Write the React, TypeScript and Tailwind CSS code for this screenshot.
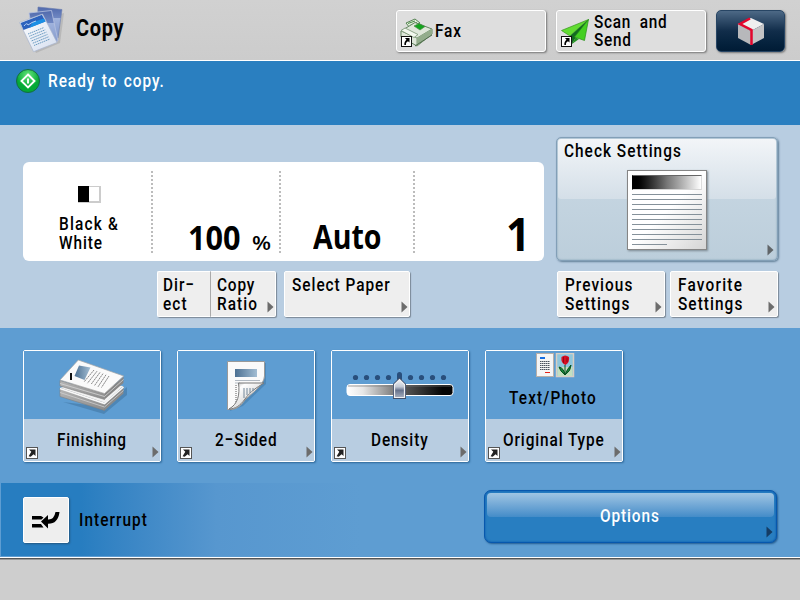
import type { ReactNode } from "react";

type TextProps = { children: ReactNode; className?: string };

/* One line of the panel's narrow gothic lettering. */
function Line({ children, className = "tracking-[1.3px]" }: TextProps) {
  return (
    <span className={`block h-[19px] w-0 origin-left scale-x-[0.81] whitespace-nowrap text-[19px] leading-[19px] font-medium ${className}`}>
      {children}
    </span>
  );
}

function Arrow({ className = "text-[#6c6c6c]" }: { className?: string }) {
  return (
    <svg className={`absolute h-[12px] w-[7px] ${className}`} viewBox="0 0 7 12">
      <path d="M0.5 0.5 L6.5 6 L0.5 11.5 Z" fill="currentColor" />
    </svg>
  );
}

function Shortcut({ className }: { className: string }) {
  return (
    <svg className={`absolute size-[12px] ${className}`} viewBox="0 0 12 12">
      <rect x="0.5" y="0.5" width="11" height="11" fill="#fff" stroke="#555" />
      <path d="M3 2.500 H9.500 V9 L7.600 7.200 L4.700 9.700 L2.600 9.200 L5.300 4.800 Z" fill="#222" />
    </svg>
  );
}

function HeaderShortcut({ className }: { className: string }) {
  return (
    <svg className={`absolute size-[11px] ${className}`} viewBox="0 0 11 11">
      <rect x="0.5" y="0.5" width="10" height="10" fill="#fff" stroke="#111" />
      <path d="M4 2 H8.5 V6.5 L7 5.2 C5 6.2 4.8 7.5 5 9 H3.4 C3 6.8 4 5 5.5 3.8 Z" fill="#000" />
    </svg>
  );
}

function CopyIcon() {
  return (
    <svg className="h-[48px] w-[46px]" viewBox="0 0 46 48">
      <defs>
        <linearGradient id="pg" x1="0" y1="0" x2="1" y2="1">
          <stop offset="0" stopColor="#fff" />
          <stop offset="1" stopColor="#d5deef" />
        </linearGradient>
        <linearGradient id="pg2" x1="0" y1="0" x2="0" y2="1">
          <stop offset="0" stopColor="#5069ac" />
          <stop offset="0.35" stopColor="#6f87c2" />
          <stop offset="0.37" stopColor="#9fb2dc" />
          <stop offset="1" stopColor="#8298cb" />
        </linearGradient>
      </defs>
      <path d="M5 20 L17 48 L41 38 L45 8Z" fill="#777" opacity="0.25" />
      <path d="M19 2 L43 4.500 L39 33 L18 32Z" fill="url(#pg2)" stroke="#6c7dae" strokeWidth="0.6" />
      <path d="M10 8 L32.500 5.500 L39 36 L16 40Z" fill="url(#pg2)" stroke="#b6c2e0" strokeWidth="0.8" />
      <path d="M0.500 17.500 L23.500 9 L38 37.500 L14.500 46.700Z" fill="url(#pg)" stroke="#a7b3cc" strokeWidth="0.7" />
      <path d="M1.500 18 L23 9.700 L26.500 16.500 L4.500 25Z" fill="#2d62bd" />
      <path d="M14 17 L25 13.500 L26.500 16.500 L10 23Z" fill="#1b8fe4" />
      <path d="M5 21 q3 -4 4 -1 q4 -3 8 -4" fill="none" stroke="#b6d2f4" />
      <g stroke="#6b9cc2" strokeWidth="1" strokeDasharray="1.5 0.6">
        <path d="M9 29 L25 22.500M10.200 31.300L26.200 24.800M11.400 33.600L27.400 27.100M12.600 35.900L28.600 29.400M13.800 38.200L29.800 31.700M15 40.500L31 34" />
      </g>
    </svg>
  );
}

function FaxIcon() {
  return (
    <svg className="h-[30px] w-[34px]" viewBox="0 0 34 30">
      <path d="M6 5 L15 1 L20 5 L10 10Z" fill="#e3f0dc" stroke="#568253" />
      <path d="M8 5.500 L15 3 M10 7.500 L17 4.500" stroke="#488a45" />
      <path d="M1 13 L15 4.500 L32 11 L32 16 L17 28 L1 19Z" fill="#dfe7da" stroke="#62845f" />
      <path d="M1 13 L17 20 L32 11 M17 20 V27" fill="none" stroke="#809b79" />
      <path d="M17 20 L32 11 V16 L17 28Z" fill="#93ad8c" />
      <path d="M14 8 L19 5.500 L25 8.500 L20 12Z" fill="#12a51d" stroke="#508b4a" strokeWidth="0.7" />
      <path d="M1 12.500 L5 10 L18 16.500 L14 19.500Z" fill="#f2f7ee" stroke="#789473" strokeWidth="0.8" />
      <path d="M15 28 L32 17" stroke="#4f6c4c" />
    </svg>
  );
}

function PlaneIcon() {
  return (
    <svg className="h-[30px] w-[30px]" viewBox="0 0 30 30">
      <path d="M27.500 0.500 L0.500 11.500 L9 17Z" fill="#62dc32" stroke="#35951e" strokeWidth="0.7" />
      <path d="M27.500 0.500 L9 17 L11 25 L15 18Z" fill="#126b20" />
      <path d="M27.500 0.500 L13.500 18 L23.500 21.500Z" fill="#43cf21" stroke="#278e19" strokeWidth="0.7" />
      <path d="M11 25 L14.500 18.500 L18 20Z" fill="#239421" />
    </svg>
  );
}

function CubeIcon() {
  return (
    <svg className="h-[29px] w-[28px]" viewBox="0 0 28 29">
      <path d="M14 1 L27 7 L14 14 L1 7Z" fill="#efefef" />
      <path d="M1 7 L14 14 V28 L1 21Z" fill="#b7b8bb" />
      <path d="M27 7 L14 14 V28 L27 21Z" fill="#c3c3c5" />
      <path d="M13 1.500 L3 7 L14.500 13 V28" fill="none" stroke="#e3052c" strokeWidth="2.500" />
    </svg>
  );
}

function DocumentIcon() {
  return (
    <div className="h-[80px] w-[80px] border border-[#858585] bg-linear-to-br from-white from-50% to-[#d5d5d5] p-1 shadow-[1px_1px_2px_#7c8992]">
      <div className="h-[15px] border border-t-[#666] border-r-[#ddd] border-b-[#d5d5d5] border-l-black bg-linear-to-r from-black via-[#777] to-white" />
      <div className="mt-1 flex flex-col gap-1">
        <i className="h-px bg-[#85919a]" />
        <i className="h-px bg-[#85919a]" />
        <i className="h-px bg-[#85919a]" />
        <i className="h-px bg-[#85919a]" />
        <i className="h-px bg-[#85919a]" />
        <i className="h-px bg-[#85919a]" />
        <i className="h-px bg-[#85919a]" />
        <i className="h-px bg-[#85919a]" />
        <i className="h-px bg-[#85919a]" />
        <i className="h-px bg-[#85919a]" />
        <i className="h-px w-1/2 bg-[#85919a]" />
      </div>
    </div>
  );
}

function FinishingIcon() {
  return (
    <svg className="ml-[33px] mt-[6px] h-[58px] w-[72px]" viewBox="0 0 72 58">
      <defs>
        <linearGradient id="stackSide" x1="0" y1="0" x2="1" y2="1">
          <stop offset="0" stopColor="#b5b5b5" />
          <stop offset="1" stopColor="#8c8c8c" />
        </linearGradient>
        <linearGradient id="photo" x1="0" y1="0" x2="1" y2="0">
          <stop offset="0" stopColor="#4c7092" />
          <stop offset="1" stopColor="#a2bdd3" />
        </linearGradient>
      </defs>
      <path d="M6 45 L47 57 L70 38 V30 L48 50Z" fill="#34658d" opacity="0.4" />
      <path d="M3 31 L20 25 L66.500 29 L47.500 46Z" fill="#f2f2f2" />
      <path d="M3 31 L47.500 46 V53.500 L3 39.500Z" fill="url(#stackSide)" stroke="#808080" strokeWidth="0.6" />
      <path d="M47.500 46 L66.500 29 V36.500 L47.500 53.500Z" fill="#8a8a8a" />
      <path d="M3 31.500 L47.500 46.500 L66.500 30" fill="none" stroke="#f8f8f8" strokeWidth="1.600" />
      <path d="M3 35.500 L47.500 50 L66.500 33.500" fill="none" stroke="#cfcfcf" strokeWidth="0.8" />
      <path d="M3 23.500 L47.500 36.500 V42.500 L3 29Z" fill="url(#stackSide)" stroke="#808080" strokeWidth="0.6" />
      <path d="M47.500 36.500 L66.500 19.500 V26 L47.500 42.500Z" fill="#868686" />
      <path d="M3 23 L21.300 3 L66.700 19 L47.500 36.500Z" fill="#fafafa" stroke="#a5a5a5" strokeWidth="0.7" />
      <path d="M3 26.500 L47.500 39.500 L66.500 22.500" fill="none" stroke="#d5d5d5" strokeWidth="0.8" />
      <path d="M22 8.500 L33.500 10.500 L27.500 23 L17.500 19Z" fill="url(#photo)" />
      <path d="M14 16 V23" stroke="#111" strokeWidth="2" />
      <path d="M37 13 L27 25M40 14.200L30.500 26.200M43 15.400L34 27.400M46 16.600L37.500 28.600M49 17.800L41 29.800M52 19L44.500 30.500" stroke="#888" strokeWidth="1" strokeDasharray="2 0.5" />
    </svg>
  );
}

function TwoSidedIcon() {
  return (
    <svg className="ml-[48px] mt-[9px] h-[52px] w-[42px]" viewBox="0 0 42 52">
      <defs>
        <linearGradient id="curl" x1="0" y1="0" x2="1" y2="1">
          <stop offset="0" stopColor="#888" />
          <stop offset="0.25" stopColor="#fff" />
          <stop offset="0.6" stopColor="#ddd" />
          <stop offset="1" stopColor="#777" />
        </linearGradient>
      </defs>
      <path d="M3 3 H40 V24 L17 46 L4 51Z" fill="#31658e" opacity="0.35" />
      <path d="M1.500 1.500 H38.500 V16 C38 25 28 31 19 40 C13 48 9 50 1.500 49.500Z" fill="#fafafa" stroke="#999" />
      <rect x="9" y="9" width="22" height="8" fill="url(#photo)" />
      <path d="M9 20.500 H34 M9 23 H14" stroke="#b1b9c2" />
      <path d="M10 25 V45" stroke="#aaa" strokeWidth="2" strokeDasharray="1 1" />
      <path d="M12.500 23 H38 C30 28 25 31 19 39 C14 46 9 49 3 49 C12 44 14 35 12.500 23Z" fill="url(#curl)" stroke="#777" />
      <path d="M18 28 V38M21 28V35M24 28V33M27 28V31" stroke="#728799" />
    </svg>
  );
}

function DensityIcon() {
  const dots = [8, 19, 30, 41, 63, 74, 85, 96];
  return (
    <svg className="ml-[14px] mt-[20px] h-[32px] w-[110px]" viewBox="0 0 110 32">
      <defs>
        <linearGradient id="density">
          <stop offset="0" stopColor="#fff" />
          <stop offset="0.15" stopColor="#e7e7e7" />
          <stop offset="0.55" stopColor="#555" />
          <stop offset="0.9" stopColor="#050505" />
        </linearGradient>
        <linearGradient id="knob" x1="0" y1="0" x2="0" y2="1">
          <stop offset="0" stopColor="#f4f6f9" />
          <stop offset="0.4" stopColor="#c3c9d4" />
          <stop offset="0.6" stopColor="#66728c" />
          <stop offset="1" stopColor="#a5adbd" />
        </linearGradient>
      </defs>
      {dots.map((x) => <circle key={x} cx={x + 1.5} cy="6.500" r="2.600" fill="#294f7c" />)}
      <rect x="51" y="1" width="5" height="9" rx="2.500" fill="#294f7c" />
      <rect x="1" y="13.500" width="106" height="11" rx="3" fill="url(#density)" stroke="#fff" />
      <path d="M2 15 H105" stroke="#777" strokeWidth="0.7" />
      <path d="M48.500 13.500 L53.500 8.500 L58.500 13.500 V26.500 H48.500Z" fill="none" stroke="#43506b" strokeWidth="3" />
      <path d="M48.500 13.500 L53.500 8.500 L58.500 13.500 V26.500 H48.500Z" fill="url(#knob)" stroke="#f0f0f0" strokeWidth="1.200" />
    </svg>
  );
}

function OriginalIcons() {
  return (
    <svg className="mt-[2px] ml-[50px] h-[25px] w-[40px]" viewBox="0 0 40 25">
      <rect x="0.500" y="0.500" width="17" height="23" fill="#f5f5f5" stroke="#b8afa8" />
      <path d="M4 5 H9" stroke="#176ee1" strokeWidth="2" />
      <path d="M4 8.500 H14M4 10.500H14M4 12.500H14M4 14.500H14M4 16.500H14" stroke="#4a525d" strokeDasharray="1.500 0.500" />
      <path d="M9 19.500 H14" stroke="#e42218" />
      <rect x="20.500" y="0.500" width="17" height="23" fill="#8fc6dc" stroke="#d7cec4" strokeWidth="1.500" />
      <path d="M21.500 14 H36.500 V23 H21.500Z" fill="#c3dfc0" />
      <path d="M25.500 4 Q29 1 33 4 Q34 9 29.500 12 Q24.500 10 25.500 4Z" fill="#d50e22" />
      <path d="M27.500 4 V10 M31 4.500 V9" stroke="#8f0614" strokeWidth="0.9" />
      <path d="M29 12 V22 M29 22 Q24 18 23 14 Q28 15 29 22 Q31 16 35 12 Q35 18 29 22" stroke="#07501f" strokeWidth="1" fill="#168638" />
    </svg>
  );
}

function PaperButton({ children, className }: { children: ReactNode; className: string }) {
  return (
    <button className={`relative flex h-[46px] shrink-0 flex-col items-start rounded-[2px] border border-white bg-[#eee] pt-[3px] text-left shadow-[1px_1px_1px_#7b8997] ${className}`}>
      {children}
    </button>
  );
}

function Tile({ icon, children }: { icon: ReactNode; children: ReactNode }) {
  return (
    <button className="relative flex h-[112px] w-[138px] shrink-0 flex-col rounded-[2px] border border-white text-left shadow-[1px_1px_2px_#2f6797]">
      <div className="h-[68px] w-full bg-[#5e9dd2]">{icon}</div>
      <div className="h-[42px] w-full bg-[#b8cde1] pt-[11px]">{children}</div>
      <Shortcut className="bottom-[2px] left-[2px]" />
      <Arrow className="right-[1px] bottom-[3px] text-[#6c6c6c]" />
    </button>
  );
}

function Divider() {
  return (
    <svg className="mt-[9px] h-[83px] w-[2px] shrink-0" viewBox="0 0 2 83">
      <path d="M1 0 V83" stroke="#bcbcbc" strokeWidth="2" strokeDasharray="2 2" />
    </svg>
  );
}

export default function App() {
  return (
    <div className="flex h-[600px] w-[800px] flex-col overflow-hidden bg-[#cecece] font-[Roboto,sans-serif] text-black">
      <header className="flex h-[61px] shrink-0 items-start border-b border-white bg-linear-to-b from-[#d1d1d1] to-[#cccccc]">
        <div className="ml-[19px] mt-[5px] w-[57px]"><CopyIcon /></div>
        <h1 className="mt-[15px] w-[320px] origin-left scale-x-[0.83] text-[24px] leading-[26px] font-bold tracking-[0.9px]">Copy</h1>
        <button className="relative mt-[10px] flex h-[42px] w-[150px] shrink-0 rounded-[3px] border border-white bg-[#dedede] pl-[3px] pt-[7px] shadow-[1px_1px_2px_#777]">
          <FaxIcon />
          <div className="ml-[1px] mt-[3px]"><Line className="tracking-[1.1px]">Fax</Line></div>
          <HeaderShortcut className="top-[25px] left-[4px]" />
        </button>
        <button className="relative mt-[10px] ml-[10px] flex h-[42px] w-[150px] shrink-0 rounded-[3px] border border-white bg-[#dedede] pl-[4px] shadow-[1px_1px_2px_#777]">
          <div className="mt-[8px]"><PlaneIcon /></div>
          <div className="ml-[3px] mt-[1px] h-[38px] text-left">
            <Line className="tracking-[0.9px] [word-spacing:5px]">Scan and</Line>
            <div className="-mt-px"><Line className="tracking-[0.9px]">Send</Line></div>
          </div>
          <HeaderShortcut className="top-[25px] left-[4px]" />
        </button>
        <button className="mt-[10px] ml-[10px] flex h-[42px] w-[69px] shrink-0 items-center justify-center rounded-[5px] border border-[#274564] bg-linear-to-b from-[#4d6986] via-[#112d4a] via-50% to-[#001b35] shadow-[1px_1px_2px_#777]">
          <CubeIcon />
        </button>
      </header>

      <section className="flex h-[64px] shrink-0 items-start bg-[#2a7fc0] pl-[16px] pt-[7px] text-white">
        <svg className="size-[25px]" viewBox="0 0 25 25">
          <defs><radialGradient id="green" cx="50%" cy="25%"><stop stopColor="#67e77e" /><stop offset="1" stopColor="#05a936" /></radialGradient></defs>
          <circle cx="12" cy="13" r="11.500" fill="url(#green)" stroke="#146b45" />
          <path d="M12 6.500 L18.500 13 L12 19.500 L5.500 13Z M12 10.500 V15.500" fill="none" stroke="#fff" strokeWidth="1.900" />
        </svg>
        <div className="ml-[7px] mt-[3px]"><Line className="tracking-[1.2px] [word-spacing:2px]">Ready to copy.</Line></div>
      </section>

      <main className="flex h-[203px] shrink-0 bg-[#b8cde1] pl-[23px]">
        <div className="w-[533px] pt-[37px]">
          <div className="flex h-[99px] w-[521px] rounded-[6px] bg-white">
            <div className="w-[128px] pt-[24px]">
              <div className="ml-[55px] flex h-[17px] w-[23px] border border-[#ccc] border-r-2 border-b-2 bg-white"><div className="-mt-px -ml-px h-[16px] w-[11px] bg-black" /></div>
              <div className="ml-[36px] mt-[11px]"><Line className="tracking-[1.5px]">Black &amp;</Line><Line className="tracking-[1.1px]">White</Line></div>
            </div>
            <Divider />
            <div className="flex w-[126px] items-baseline pl-[35px] pt-[50px] font-['Open_Sans',sans-serif] whitespace-nowrap">
              <span className="block w-[64px] origin-left scale-x-[0.9] text-[34px] leading-[50px] font-bold">100</span>
              <span className="block w-0 origin-left scale-x-[1.1] text-[20px] leading-[50px] font-semibold">%</span>
            </div>
            <Divider />
            <div className="w-[132px] pl-[32px] pt-[49px] font-['Open_Sans',sans-serif]"><span className="block w-0 origin-left scale-x-[0.84] text-[34px] leading-[50px] font-bold">Auto</span></div>
            <Divider />
            <div className="flex flex-1 justify-end pt-[42px] pr-[14px] font-['Open_Sans',sans-serif]"><span className="origin-right scale-x-[0.92] text-[46px] leading-[58px] font-bold">1</span></div>
          </div>
          <div className="mt-[10px] ml-[134px] flex">
            <PaperButton className="w-[53px] rounded-r-none border-r-0 pl-[5px]"><Line>Dir−</Line><Line>ect</Line></PaperButton>
            <PaperButton className="w-[66px] rounded-l-none border-l border-l-[#aaa] pl-[6px]"><Line className="tracking-[1px]">Copy</Line><Line>Ratio</Line><Arrow className="right-[1px] bottom-[3px] text-[#6c6c6c]" /></PaperButton>
            <PaperButton className="ml-[8px] w-[126px] pl-[7px]"><Line className="tracking-[1.2px]">Select Paper</Line><Arrow className="right-[1px] bottom-[3px] text-[#6c6c6c]" /></PaperButton>
          </div>
        </div>
        <div className="w-[222px] pt-[12px]">
          <button className="relative flex h-[124px] w-[222px] flex-col rounded-[5px] border border-[#829fb7] bg-linear-to-b from-[#cbdae5] to-[#bccedb] p-[1px] text-left shadow-[1px_1px_2px_#617f97,inset_0_0_2px_#7897b0]">
            <div className="h-[60px] w-full rounded-[3px] bg-linear-to-b from-[#f2f5f8] to-[#d4dfe8] pl-[6px] pt-[2px]">
              <Line className="tracking-[1.25px]">Check Settings</Line>
              <div className="ml-[63px] mt-[10px]"><DocumentIcon /></div>
            </div>
            <Arrow className="right-[3px] bottom-[4px] text-[#606568]" />
          </button>
          <div className="mt-[10px] ml-px flex gap-[5px]">
            <PaperButton className="w-[108px] pl-[7px]"><Line className="tracking-[1.3px]">Previous</Line><Line>Settings</Line><Arrow className="right-[2px] bottom-[3px] text-[#6c6c6c]" /></PaperButton>
            <PaperButton className="w-[108px] pl-[7px]"><Line className="tracking-[1.5px]">Favorite</Line><Line>Settings</Line><Arrow className="right-[2px] bottom-[3px] text-[#6c6c6c]" /></PaperButton>
          </div>
        </div>
      </main>

      <section className="flex h-[229px] shrink-0 flex-col bg-[#5e9dd2]">
        <div className="flex h-[155px] gap-[16px] pl-[23px] pt-[22px]">
          <Tile icon={<FinishingIcon />}><div className="ml-[33px]"><Line className="tracking-[1px]">Finishing</Line></div></Tile>
          <Tile icon={<TwoSidedIcon />}><div className="ml-[37px]"><Line className="tracking-[1.1px]">2−Sided</Line></div></Tile>
          <Tile icon={<DensityIcon />}><div className="ml-[39px]"><Line className="tracking-[1.1px]">Density</Line></div></Tile>
          <Tile icon={<><OriginalIcons /><div className="mt-[10px] ml-[23px]"><Line className="tracking-[1.4px]">Text/Photo</Line></div></>}><div className="ml-[17px]"><Line className="tracking-[1.1px]">Original Type</Line></div></Tile>
        </div>
        <div className="ml-px flex h-[73px] bg-linear-to-r from-[#277dc0] from-10% via-[#5797cf] via-27% to-[#5e9dd2] to-45% pl-[22px]">
          <button className="mt-[14px] flex h-[46px] w-[46px] shrink-0 items-center justify-center rounded-[2px] border border-white bg-[#eee] shadow-[1px_1px_2px_#245781]">
            <svg className="h-[18px] w-[28px]" viewBox="0 0 28 18">
              <path d="M0 5 H9 L11.500 6.500 L9.500 8.500 H0Z M0 13 H9 L11.500 16.500 H0Z" fill="#000" />
              <path d="M9 10.500 L16 4 V8.500 Q22 9 23.500 1 H27.500 Q26 13 16 12.800 V17.500Z" fill="#000" />
            </svg>
          </button>
          <div className="ml-[10px] mt-[27px] w-[405px]"><Line className="tracking-[1.3px]">Interrupt</Line></div>
          <button className="relative mt-[7px] flex h-[53px] w-[293px] shrink-0 flex-col rounded-[7px] border border-[#0757ad] bg-[#287ec1] p-[2px] text-white shadow-[1px_1px_2px_#245d91,inset_0_0_2px_#0050aa]">
            <div className="h-[24px] w-full rounded-[4px] bg-linear-to-b from-[#9fc5e3] to-[#438cc8] pt-[13px] pl-[113px]"><Line className="tracking-[1.1px]">Options</Line></div>
            <Arrow className="right-[3px] bottom-[4px] text-[#153c64]" />
          </button>
        </div>
      </section>
      <footer className="h-[43px] border-t border-white bg-[#cecece]"><div className="h-[2px] border-b border-[#999] bg-[#555]" /></footer>
    </div>
  );
}
